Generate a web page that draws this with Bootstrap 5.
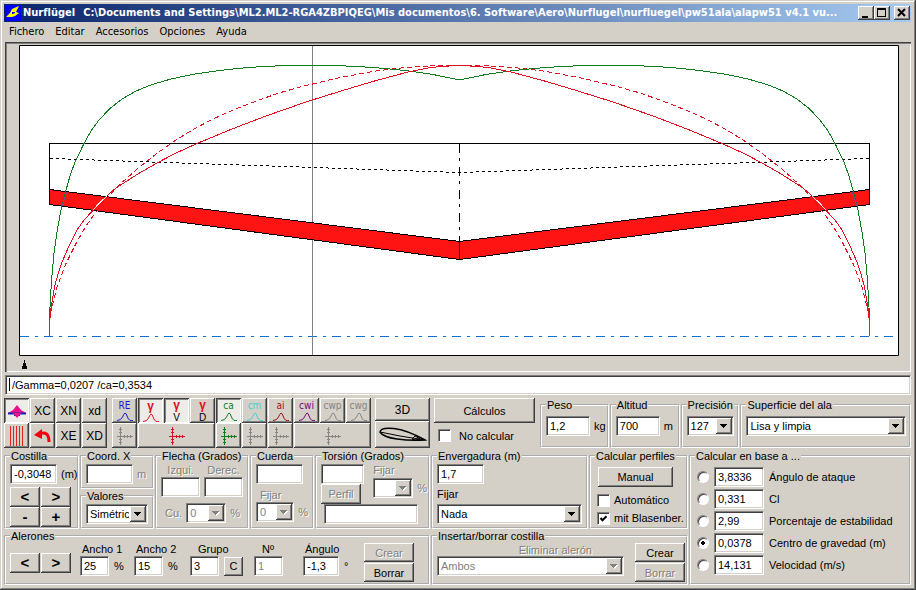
<!DOCTYPE html>
<html lang="es">
<head>
<meta charset="utf-8">
<meta name="viewport" content="width=device-width, initial-scale=1">
<title>Nurflügel</title>
<link href="https://cdn.jsdelivr.net/npm/bootstrap@5.3.0/dist/css/bootstrap.min.css" rel="stylesheet">
<style>
:root{--face:#d4d0c8;--shade:#808080;--dark:#404040}
body{background:var(--face);color:#000;font:11px/14px "Liberation Sans",Arial,sans-serif}
.win{padding:4px 5px 5px 4px;background:var(--face);
  box-shadow:inset -1px -1px var(--dark),inset 1px 1px var(--face),inset -2px -2px var(--shade),inset 2px 2px #fff}
.titlebar{height:18px;padding:0 1px;background:linear-gradient(90deg,#0a246a,#a6caf0);color:#fff;
  font:bold 11px/18px "DejaVu Sans Condensed","DejaVu Sans",sans-serif}
.app-icon{width:16px;height:16px;margin-right:2px}
.doc-path{margin-left:8px}
.menubar{height:20px;padding-left:5px;font:11px/20px "DejaVu Sans Condensed","DejaVu Sans",sans-serif;gap:11px}
.menubar a{color:#000;text-decoration:none}

/* raised and sunken faces */
.btn.face{border:0;border-radius:0;background:var(--face);color:#000;font:inherit;padding:0;
  box-shadow:inset -1px -1px var(--dark),inset 1px 1px #fff,inset -2px -2px var(--shade)}
.btn.face:disabled{opacity:1;color:var(--shade);text-shadow:1px 1px #fff}
.btn.face.pressed{background:#eeece8;box-shadow:inset 1px 1px var(--dark),inset -1px -1px #fff,inset 2px 2px var(--shade)}
.form-control.field,.form-select.field{height:20px;min-height:0;border:1px solid;border-color:var(--shade) #fff #fff var(--shade);
  box-shadow:inset 1px 1px var(--dark),inset -1px -1px var(--face);border-radius:0;padding:0 3px;background-color:#fff;color:#000;font:11px/18px "Liberation Sans",Arial,sans-serif}
.form-select.field{padding:0 18px 0 3px;background-size:16px 16px;background-position:right 1px center;background-repeat:no-repeat;text-overflow:clip;
  background-image:url("data:image/svg+xml,%3Csvg xmlns='http://www.w3.org/2000/svg' viewBox='0 0 16 16'%3E%3Cpath fill='%23404040' d='M0 0h16v16H0z'/%3E%3Cpath fill='%23fff' d='M0 0h15v15H0z'/%3E%3Cpath fill='%23808080' d='M1 1h14v14H1z'/%3E%3Cpath fill='%23d4d0c8' d='M1 1h13v13H1z'/%3E%3Cpath d='M4 6h7v1h-1v1H9v1H8v1H7V9H6V8H5V7H4z'/%3E%3C/svg%3E")}
.form-control.field:disabled{color:var(--shade)}
.form-select.field:disabled{color:var(--shade);
  background-image:url("data:image/svg+xml,%3Csvg xmlns='http://www.w3.org/2000/svg' viewBox='0 0 16 16'%3E%3Cpath fill='%23404040' d='M0 0h16v16H0z'/%3E%3Cpath fill='%23fff' d='M0 0h15v15H0z'/%3E%3Cpath fill='%23808080' d='M1 1h14v14H1z'/%3E%3Cpath fill='%23d4d0c8' d='M1 1h13v13H1z'/%3E%3Cpath fill='%23fff' d='M5 7h7v1h-1v1h-1v1H9v1H8v-1H7V9H6V8H5z'/%3E%3Cpath fill='%23808080' d='M4 6h7v1h-1v1H9v1H8v1H7V9H6V8H5V7H4z'/%3E%3C/svg%3E")}
.dim{color:var(--shade);text-shadow:1px 1px #fff}
.w28{width:29px}.w38{width:39px}.w47{width:47px}.w50{width:50px}

.win-btn{width:16px;height:14px;display:flex;flex:none}
.btn.nav-btn{width:30px;height:20px;font:bold 15px/18px "Liberation Sans",sans-serif}
.btn.text-btn{width:50px;height:19px}

/* plot */
.plot{margin:0 0 3px 1px;padding:2px 12px 0 13px;border:solid var(--dark);border-width:1px 0 0 1px;
  box-shadow:inset 1px 1px var(--shade),inset -1px -1px #fff}
.plot svg{display:block;width:100%;height:auto}
.ruler{height:16px;padding:4px 0 0 2px}
.plot .ruler svg{width:7px;height:9px}
.form-control.command{height:20px;margin:0 0 3px 1px;width:auto;flex:1;padding-left:6px;
  background-image:linear-gradient(#000,#000);background-size:1px 13px;background-position:3px 2px;background-repeat:no-repeat}

/* tool buttons */
.tools{display:grid;flex:none;grid-auto-flow:column;grid-template-rows:25px 25px;grid-auto-columns:26px}
.tools .btn{display:flex;flex-direction:column;align-items:center;justify-content:center;margin-right:1px;font:12px/14px "Liberation Sans",sans-serif}
.tools .tag{font:10px/12px "DejaVu Sans Condensed","DejaVu Sans",sans-serif;height:12px}
.tools .gam{font:bold 12px/13px "Liberation Sans",sans-serif;height:13px;color:#e01020}
.tools .low{font:10px/11px "Liberation Sans",sans-serif}
.tools svg{display:block}
.bell{width:18px;height:9px;fill:none;stroke:currentColor}
.axis{width:16px;height:18px;fill:none;stroke:currentColor;shape-rendering:crispEdges}
.btn.blue{color:#1a1ad0}.btn.red{color:#e01020}.btn.green{color:#0c7c1c}.btn.cyan{color:#3fd0d0}
.btn.maroon{color:#a01010}.btn.purple{color:#800080}.btn.greyed{color:#858585}
.wide-gamma{grid-row:2;grid-column:2/5}.wide-cw{grid-row:2;grid-column:8/11}.top-row{grid-row:1}
.tool-bar{margin-bottom:1px}
.airfoil-col{width:58px;padding-left:3px}
.calc-col{width:101px;flex:none}
.quick{column-gap:1px;grid-template-columns:minmax(0,69fr) minmax(0,70fr) minmax(0,59fr) minmax(0,171fr);margin-left:1px;height:50px}
.form-control.qf{width:44px}
.quick fieldset.group{padding-right:3px}
.quick fieldset.group>div,.quick fieldset.group>select{margin-top:4px}

/* group boxes */
fieldset.group{border:2px groove #fff;min-width:0;padding:0 4px;margin:0}
fieldset.group>legend{float:none;width:auto;margin:0;padding:0 1px;font:11px/14px "Liberation Sans",Arial,sans-serif;white-space:nowrap}
.params{display:grid;row-gap:0;column-gap:1px;white-space:nowrap;
  grid-template-columns:minmax(0,75fr) minmax(0,74fr) minmax(0,94fr) minmax(0,64fr) minmax(0,115fr) minmax(0,157fr) minmax(0,99fr) minmax(0,222fr);
  grid-template-rows:80px 56px}
.two-rows{grid-row:1/3;grid-column:8}
.ailerons{grid-column:1/6}.ribs{grid-column:6/8}
.form-check-input.tick{width:13px;height:13px;margin:0;border:1px solid;border-color:var(--shade) #fff #fff var(--shade);border-radius:0;
  box-shadow:inset 1px 1px var(--dark);background-color:#fff;flex:none}
.form-check-input.tick:checked{background:#fff url("data:image/svg+xml,%3Csvg xmlns='http://www.w3.org/2000/svg' viewBox='0 0 9 9'%3E%3Cpath fill='none' stroke='%23000' stroke-width='2' d='M1.5 4l2 2.200l4-4'/%3E%3C/svg%3E") center/9px 9px no-repeat}
.form-check-input.dot[type=radio]{width:12px;height:12px;margin:0 0 0 2px;border:1px solid;border-color:var(--shade) #fff #fff var(--shade);
  box-shadow:inset 1px 1px var(--dark);border-radius:50%;background:#fff;flex:none}
.form-check-input.dot[type=radio]:checked{background:radial-gradient(circle,#000 2px,#fff 2px)}
.gap-line{row-gap:2px}
.pt-1px{padding-top:1px}.mt-1px{margin-top:1px}.pt-6{padding-top:6px}
.nav-grid{padding-top:3px;column-gap:1px}
.nav-pair{gap:1px;margin-right:9px}
.form-select.sel-sm{width:40px}
.w42{width:43px}.w36{width:36px}
fieldset.group.twist{padding-right:1px}
.btn.perfil-btn{width:40px;height:20px}
.form-control.perfil-name{margin-left:3px;width:calc(100% - 12px)}
.lbl-mid{padding:3px 0}
.btn.manual-btn{width:75px;height:20px;margin:4px 0 4px 1px}
.checks{padding-left:2px}
.checks label{height:18px}
.base-row{display:flex;align-items:center;gap:5px}
.ail-col{width:54px}.ail-col.wide{width:66px;padding-left:2px}.ail-col.slim{width:49px}
.ail-col>label{display:block;height:13px;line-height:12px;padding-left:2px}
.ail-col>div{display:flex;align-items:center;gap:5px}
.btn.c-btn{width:19px;height:19px}
.stack{gap:1px}
.ail-end{margin-left:auto;margin-right:10px}
.rib-sel{margin-right:11px}.rib-sel label{padding-right:32px;height:13px}
fieldset.group.ribs{padding-right:1px}
</style>
<script src="https://cdn.jsdelivr.net/npm/bootstrap@5.3.0/dist/js/bootstrap.bundle.min.js"></script>
</head>
<body>
<svg width="0" height="0" class="position-absolute" aria-hidden="true">
  <symbol id="bell" viewBox="0 0 18 9"><path d="M1 8.500q4 0 5.500-3.500T9 1t2.500 4t5.500 3.500"/></symbol>
  <symbol id="axis" viewBox="0 0 16 18"><path d="M3.500 0v18M0 9.500h16M2 2.500h3M2 5.500h3M2 12.500h3M2 15.500h3M7.500 8v3M10.500 8v3M13.500 8v3"/></symbol>
</svg>

<div class="win">
  <header class="titlebar d-flex align-items-center">
    <svg class="app-icon flex-shrink-0" viewBox="0 0 16 16"><path fill="#00f" d="M0 0h16v16H0z"/><path fill="#ff0" fill-rule="evenodd" d="M14 1L7 4L5 8L1 12H7L10 11L14 8L11 7zM7 7h3v1L8 9H7z"/></svg>
    <span>Nurflügel</span>
    <span class="doc-path flex-grow-1 text-truncate">C:\Documents and Settings\ML2.ML2-RGA4ZBPIQEG\Mis documentos\6. Software\Aero\Nurflugel\nurfluegel\pw51ala\alapw51 v4.1 vu...</span>
    <button class="btn face win-btn" aria-label="Minimizar"><svg width="16" height="14"><path d="M4 10h6v2H4z"/></svg></button>
    <button class="btn face win-btn" aria-label="Maximizar"><svg width="16" height="14"><path d="M3 2h9v9H3zM4 4v6h7V4z" fill-rule="evenodd"/></svg></button>
    <button class="btn face win-btn ms-1" aria-label="Cerrar"><svg width="16" height="14"><path d="M4 3l7 7M11 3l-7 7" stroke="#000" stroke-width="2"/></svg></button>
  </header>

  <nav class="menubar d-flex" aria-label="Menú">
    <a href="#">Fichero</a><a href="#">Editar</a><a href="#">Accesorios</a><a href="#">Opciones</a><a href="#">Ayuda</a>
  </nav>

  <main>
  <div class="plot">
    <svg viewBox="19 45 880 311" role="img" aria-label="Planta del ala">
      <path fill="#fff" stroke="#000" d="M19.500 45.500h879v310h-879z"/>
      <path fill="none" stroke="#0a70d0" stroke-dasharray="9 6 3 6" shape-rendering="crispEdges" d="M20 336.500H898"/>
      <path fill="none" stroke="#808080" d="M312.500 46V355"/>
      <g fill="none" stroke="#000" shape-rendering="crispEdges">
        <path fill="#ff1414" d="M49.500 189.500L459.500 241.500L869.500 189.500V204.500L459.500 259.500L49.500 204.500z"/>
        <path d="M49.500 190V143.500H869.500V190"/>
        <path stroke-dasharray="3 3" d="M50 158.500L459.500 172.500M869 158.500L459.500 172.500"/>
        <path stroke-dasharray="9 5 3 6" d="M459.500 144V241"/>
        <path d="M459.500 241V259"/>
      </g>
      <g id="half" fill="none" shape-rendering="crispEdges" stroke-linejoin="round">
        <path stroke="#0c7c1c" d="M459.500 80L486 74.500L506 71.500L523 69.500L546 67.500L565 66.300L586 65.500H633L655 66.500L673 67.700L700 70.500L727 74.500L748 79L767 84.500L783 91L797 99L809 108.500L820 120L828 131L835 143.500L844 162L849 176L853 190L858 210L862 232L865 253L867 275L868.500 297L869.500 317V336"/>
        <path stroke="#e01020" d="M459.500 65.500L470 66L487 67.300L510 71.700L547 81.700L577 90.700L613 102L653 116L687 129L722 143.500L744 153.500L763 163.500L782 174.500L803 188L813 196.700L827 211.500L835 220L842 230L850 246L857 262L861 274L864.500 287L868 308L869 318"/>
        <path stroke="#e01020" stroke-dasharray="5 3" d="M459.500 65.500L482 65.600L503 66.700L523 68.500L543 71L580 77.700L617 86.500L640 93L660 100L687 110.500L707 119.500L726 129.500L743 140L763 154L783 170L802 187L813 199L823 212L833 226L843 243.500L853 263.500L862 287L868.500 313"/>
        <path stroke="#ffe0e0" d="M812 196L819 202.500L826 210"/>
        <path stroke="#705080" d="M852.500 192L857 206"/>
        <path stroke="#107c80" d="M869.500 320V336"/>
      </g>
      <use href="#half" transform="matrix(-1 0 0 1 919 0)"/>
    </svg>
    <div class="ruler"><svg viewBox="0 0 7 9"><path d="M3 0h1v3h1v3h1v3H1V6h1V3h1z"/></svg></div>
  </div>

  <div class="d-flex"><input class="form-control field command" aria-label="Estado" value="/Gamma=0,0207 /ca=0,3534"></div>

  <div class="d-flex tool-bar">
    <div class="tools me-1">
      <button class="btn face pressed" aria-label="Ala"><svg width="20" height="14"><path d="M10 1l4 5l5 3H1l5-3z" fill="#f0108c"/><path d="M1 9.500h18M7 11h6" stroke="#2020c0" stroke-width="2"/><path d="M6 9h8l-4 5z" fill="#f0108c"/></svg></button>
      <button class="btn face" aria-label="Costillas"><svg width="16" height="20"><path d="M1.500 0v20M4.500 0v20M7.500 0v20M10.500 0v20M13.500 0v20" stroke="#e82020"/></svg></button>
      <button class="btn face">XC</button>
      <button class="btn face" aria-label="Deshacer"><svg width="18" height="16"><path d="M5 6q10-4 10 8" fill="none" stroke="#f00010" stroke-width="3"/><path d="M0 7l8-6v10z" fill="#f00010"/></svg></button>
      <button class="btn face">XN</button><button class="btn face">XE</button>
      <button class="btn face">xd</button><button class="btn face">XD</button>
    </div>
    <div class="tools">
      <button class="btn face blue"><span class="tag">RE</span><svg class="bell"><use href="#bell"/></svg></button>
      <button class="btn face greyed" aria-label="Escala RE"><svg class="axis"><use href="#axis"/></svg></button>
      <button class="btn face pressed red"><span class="gam">γ</span><svg class="bell"><use href="#bell"/></svg></button>
      <button class="btn face red wide-gamma" aria-label="Escala gamma"><svg class="axis"><use href="#axis"/></svg></button>
      <button class="btn face pressed"><span class="gam">γ</span><span class="low">V</span></button>
      <button class="btn face top-row"><span class="gam">γ</span><span class="low">D</span></button>
      <button class="btn face pressed green"><span class="tag">ca</span><svg class="bell"><use href="#bell"/></svg></button>
      <button class="btn face green" aria-label="Escala ca"><svg class="axis"><use href="#axis"/></svg></button>
      <button class="btn face cyan"><span class="tag">cm</span><svg class="bell"><use href="#bell"/></svg></button>
      <button class="btn face greyed" aria-label="Escala cm"><svg class="axis"><use href="#axis"/></svg></button>
      <button class="btn face maroon"><span class="tag">ai</span><svg class="bell"><use href="#bell"/></svg></button>
      <button class="btn face greyed" aria-label="Escala ai"><svg class="axis"><use href="#axis"/></svg></button>
      <button class="btn face purple top-row"><span class="tag">cwi</span><svg class="bell"><use href="#bell"/></svg></button>
      <button class="btn face greyed top-row"><span class="tag">cwp</span><svg class="bell"><use href="#bell"/></svg></button>
      <button class="btn face greyed top-row"><span class="tag">cwg</span><svg class="bell"><use href="#bell"/></svg></button>
      <button class="btn face greyed wide-cw" aria-label="Escala cw"><svg class="axis"><use href="#axis"/></svg></button>
    </div>
    <div class="tools airfoil-col d-flex flex-column me-1">
      <button class="btn face flex-fill me-0">3D</button>
      <button class="btn face flex-fill me-0" aria-label="Perfil alar"><svg width="50" height="18" fill="none" stroke="#000"><path d="M2 6q1-5 14-3.500T47 14q-14 1-28-1T2 6z" stroke-width="1.500"/><path d="M2 6l20 4l25 4M37 10l-3 3l3 1l5-1z"/></svg></button>
    </div>
    <div class="calc-col d-flex flex-column me-1">
      <button class="btn face h-50">Cálculos</button>
      <label class="d-flex align-items-center gap-1 ps-1 h-50"><input type="checkbox" class="form-check-input tick me-1">No calcular</label>
    </div>
    <div class="quick d-grid flex-fill">
      <fieldset class="group"><legend>Peso</legend>
        <div class="d-flex align-items-center gap-1"><input class="form-control field qf" aria-label="Peso" value="1,2"><span>kg</span></div></fieldset>
      <fieldset class="group"><legend>Altitud</legend>
        <div class="d-flex align-items-center gap-1"><input class="form-control field qf" aria-label="Altitud" value="700"><span>m</span></div></fieldset>
      <fieldset class="group"><legend>Precisión</legend>
        <select class="form-select field" aria-label="Precisión"><option>127</option></select></fieldset>
      <fieldset class="group"><legend>Superficie del ala</legend>
        <select class="form-select field" aria-label="Superficie del ala"><option>Lisa y limpia</option></select></fieldset>
    </div>
  </div>

  <div class="params">
    <fieldset class="group"><legend>Costilla</legend>
      <div class="d-flex align-items-center gap-1 pt-1px"><input class="form-control field w47" aria-label="Costilla" value="-0,3048"><span>(m)</span></div>
      <div class="d-flex flex-wrap nav-grid"><button class="btn face nav-btn">&lt;</button><button class="btn face nav-btn">&gt;</button><button class="btn face nav-btn">-</button><button class="btn face nav-btn">+</button></div>
    </fieldset>

    <div class="d-grid">
      <fieldset class="group"><legend>Coord. X</legend>
        <div class="d-flex align-items-center gap-1 pt-1px"><input class="form-control field w47" aria-label="Coord. X"><span class="dim">m</span></div></fieldset>
      <fieldset class="group"><legend>Valores</legend>
        <select class="form-select field mt-1px" aria-label="Valores"><option>Simétrico</option></select></fieldset>
    </div>

    <fieldset class="group"><legend>Flecha (Grados)</legend>
      <div class="d-flex gap-1">
        <div class="text-center"><label class="d-block dim" for="izq">Izqui.</label><input id="izq" class="form-control field w38"></div>
        <div class="text-center"><label class="d-block dim" for="der">Derec.</label><input id="der" class="form-control field w38"></div>
      </div>
      <div class="d-flex align-items-center gap-1 pt-6"><label class="dim ps-1" for="cu">Cu.</label><select id="cu" class="form-select field sel-sm" disabled><option>0</option></select><span class="dim">%</span></div>
    </fieldset>

    <fieldset class="group"><legend>Cuerda</legend>
      <input class="form-control field w47 mt-1px" aria-label="Cuerda">
      <label class="d-block dim pt-1 ps-1" for="fc">Fijar</label>
      <div class="d-flex align-items-center gap-1"><select id="fc" class="form-select field sel-sm" disabled><option>0</option></select><span class="dim">%</span></div>
    </fieldset>

    <fieldset class="group twist"><legend>Torsión (Grados)</legend>
      <div class="d-flex justify-content-between">
        <div><input class="form-control field w42 mt-1px" aria-label="Torsión"><button class="btn face perfil-btn d-block" disabled>Perfil</button></div>
        <div><label class="d-block dim" for="ft">Fijar</label>
          <div class="d-flex align-items-center gap-1 mt-1px"><select id="ft" class="form-select field sel-sm" disabled></select><span class="dim">%</span></div></div>
      </div>
      <input class="form-control field perfil-name" aria-label="Perfil">
    </fieldset>

    <fieldset class="group"><legend>Envergadura (m)</legend>
      <input class="form-control field w47 mt-1px" aria-label="Envergadura" value="1,7">
      <label class="d-block lbl-mid" for="fe">Fijar</label>
      <select id="fe" class="form-select field"><option>Nada</option></select>
    </fieldset>

    <fieldset class="group"><legend>Calcular perfiles</legend>
      <div class="d-flex flex-column checks"><button class="btn face manual-btn">Manual</button>
        <label class="d-flex align-items-center"><input type="checkbox" class="form-check-input tick me-1">Automático</label>
        <label class="d-flex align-items-center"><input type="checkbox" class="form-check-input tick me-1" checked>mit Blasenber.</label></div>
    </fieldset>

    <fieldset class="group two-rows"><legend>Calcular en base a ...</legend>
      <div class="d-grid gap-line pt-1">
        <div class="base-row"><input type="radio" name="base" id="b1" class="form-check-input dot"><input class="form-control field w50" aria-label="Valor ángulo" value="3,8336"><label for="b1">Ángulo de ataque</label></div>
        <div class="base-row"><input type="radio" name="base" id="b2" class="form-check-input dot"><input class="form-control field w50" aria-label="Valor Cl" value="0,331"><label for="b2">Cl</label></div>
        <div class="base-row"><input type="radio" name="base" id="b3" class="form-check-input dot"><input class="form-control field w50" aria-label="Valor estabilidad" value="2,99"><label for="b3">Porcentaje de estabilidad</label></div>
        <div class="base-row"><input type="radio" name="base" id="b4" class="form-check-input dot" checked><input class="form-control field w50" aria-label="Valor centro" value="0,0378"><label for="b4">Centro de gravedad (m)</label></div>
        <div class="base-row"><input type="radio" name="base" id="b5" class="form-check-input dot"><input class="form-control field w50" aria-label="Valor velocidad" value="14,131"><label for="b5">Velocidad (m/s)</label></div>
      </div>
    </fieldset>

    <fieldset class="group ailerons"><legend>Alerones</legend>
      <div class="d-flex">
        <div class="d-flex align-items-center nav-pair"><button class="btn face nav-btn">&lt;</button><button class="btn face nav-btn">&gt;</button></div>
        <div class="ail-col"><label for="a1">Ancho 1</label><div><input id="a1" class="form-control field w28" value="25"><span>%</span></div></div>
        <div class="ail-col"><label for="a2">Ancho 2</label><div><input id="a2" class="form-control field w28" value="15"><span>%</span></div></div>
        <div class="ail-col wide"><label for="a3" class="ps-2">Grupo</label><div><input id="a3" class="form-control field w28" value="3"><button class="btn face c-btn">C</button></div></div>
        <div class="ail-col slim"><label for="a4" class="ps-2">Nº</label><div><input id="a4" class="form-control field w28" value="1" disabled></div></div>
        <div class="ail-col"><label for="a5">Ángulo</label><div><input id="a5" class="form-control field w36" value="-1,3"><span>°</span></div></div>
        <div class="d-flex flex-column stack ail-end"><button class="btn face text-btn" disabled>Crear</button><button class="btn face text-btn">Borrar</button></div>
      </div>
    </fieldset>

    <fieldset class="group ribs"><legend>Insertar/borrar costilla</legend>
      <div class="d-flex">
        <div class="flex-fill rib-sel"><label class="d-block dim text-end" for="al">Eliminar alerón</label><select id="al" class="form-select field" disabled><option>Ambos</option></select></div>
        <div class="d-flex flex-column stack"><button class="btn face text-btn">Crear</button><button class="btn face text-btn" disabled>Borrar</button></div>
      </div>
    </fieldset>
  </div>
  </main>
</div>
</body>
</html>
